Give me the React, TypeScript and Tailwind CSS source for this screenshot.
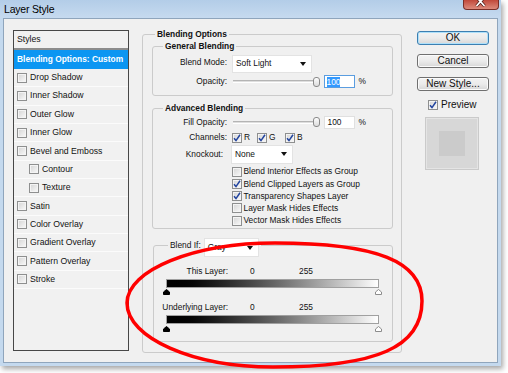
import React from 'react';

const styleRows = [
  { label: 'Drop Shadow' },
  { label: 'Inner Shadow' },
  { label: 'Outer Glow' },
  { label: 'Inner Glow' },
  { label: 'Bevel and Emboss' },
  { label: 'Contour', sub: true },
  { label: 'Texture', sub: true },
  { label: 'Satin' },
  { label: 'Color Overlay' },
  { label: 'Gradient Overlay' },
  { label: 'Pattern Overlay' },
  { label: 'Stroke' },
];

const advancedChecks = [
  { label: 'Blend Interior Effects as Group', checked: false },
  { label: 'Blend Clipped Layers as Group', checked: true },
  { label: 'Transparency Shapes Layer', checked: true },
  { label: 'Layer Mask Hides Effects', checked: false },
  { label: 'Vector Mask Hides Effects', checked: false },
];

const Check = ({ checked = false }: { checked?: boolean }) => (
  <span className="flex h-[10px] w-[10px] shrink-0 items-center justify-center border border-[#8e8f8f] bg-linear-to-br from-[#d4d4d4] to-[#fafafa] shadow-[inset_0_0_0_1px_#f4f4f4]">
    {checked && (
      <svg width="8" height="8" viewBox="0 0 8 8">
        <path d="M1 4.3 L3 6.6 L7 0.8" fill="none" stroke="#22449e" strokeWidth="1.5" />
      </svg>
    )}
  </span>
);

const Arrow = () => (
  <svg width="6" height="4" viewBox="0 0 6 4">
    <path d="M0 0 H6 L3 4 Z" fill="#111" />
  </svg>
);

const Select = ({ value, className }: { value: string; className: string }) => (
  <div className={`flex shrink-0 items-center justify-between border border-[#e3e3e3] bg-white pl-[3px] pr-[5px] ${className}`}>
    <span className="text-[8.4px] leading-[11px]">{value}</span>
    <Arrow />
  </div>
);

const Slider = () => (
  <div className="ml-[6px] flex w-[87px] items-center">
    <div className="h-[3px] flex-1 border-t border-b border-t-[#b4b4b4] border-b-white bg-[#dedede]" />
    <div className="h-[10px] w-[7px] rounded-[3px] border border-[#8a8a8a] bg-linear-to-b from-[#fdfdfd] to-[#dcdcdc]" />
  </div>
);

const Marker = ({ dark }: { dark?: boolean }) => (
  <svg width="7" height="6" viewBox="0 0 7 6">
    <path
      d="M0.5 5.5 V3 L3.5 0.5 L6.5 3 V5.5 Z"
      fill={dark ? '#000' : '#fff'}
      stroke={dark ? '#000' : '#8c8c8c'}
      strokeWidth="1"
    />
  </svg>
);

const Button = ({ label, primary }: { label: string; primary?: boolean }) => (
  <div
    className={`flex h-[14px] w-[72px] items-center justify-center rounded-[3px] border bg-linear-to-b from-[#f3f3f3] via-[#ebebeb] to-[#d7d7d7] text-[10px] leading-[12px] ${
      primary ? 'border-[#3c7fb1] shadow-[inset_0_0_0_1px_#aee0fa]' : 'border-[#707070] shadow-[inset_0_0_0_1px_#fbfbfb]'
    }`}
  >
    {label}
  </div>
);

const Label = ({ children, className = '' }: { children: React.ReactNode; className?: string }) => (
  <span className={`w-[74px] shrink-0 text-right text-[8.4px] leading-[11px] ${className}`}>{children}</span>
);

export default function App() {
  return (
    <div className="relative h-[373px] w-[508px] overflow-hidden bg-white font-['Liberation_Sans',Arial,sans-serif] text-[#111]">
      <div className="flex h-[366px] w-[501px] flex-col bg-[#c4d9ee] shadow-[2px_3px_5px_rgba(0,0,0,0.35)]">
        {/* title bar */}
        <div className="flex h-[18px] shrink-0 items-start justify-between bg-linear-to-b from-[#b3cde8] to-[#c6daef]">
          <span className="pl-[4px] pt-[3px] text-[10.5px] leading-[13px] tracking-[-0.2px] text-black">Layer Style</span>
          <div className="mr-[2px] h-[10px] w-[36px] rounded-b-[4px] border border-t-0 border-[#7a2e27] bg-linear-to-b from-[#c0473a] to-[#dc8a7c]">
            <svg width="34" height="9" viewBox="0 0 34 9">
              <path d="M12.5 -3 L20.5 6 M20.5 -3 L12.5 6" stroke="#4a1a16" strokeWidth="3.2" />
              <path d="M12.5 -3 L20.5 6 M20.5 -3 L12.5 6" stroke="#fff" strokeWidth="1.8" />
            </svg>
          </div>
        </div>

        {/* content */}
        <div className="ml-[3px] h-[345px] w-[495px] border border-[#8fa5bc] bg-[#f0f0f0]">
          <div className="flex items-start">
            {/* styles list */}
            <div className="ml-[8.5px] mt-[11px] h-[321px] w-[116px] shrink-0 border border-[#474747] bg-[#f1f1f1]">
              <div className="flex h-[19px] items-center border-b-2 border-[#8c8c8c] pl-[3.5px] text-[8.7px]">Styles</div>
              <div className="flex h-[19px] items-center bg-[#0c96f2] pl-[3.5px] text-[8.4px] font-bold text-white">
                Blending Options: Custom
              </div>
              {styleRows.map((r) => (
                <div
                  key={r.label}
                  className={`flex h-[18.35px] items-center gap-[3px] border-b border-[#fbfbfb] text-[8.7px] ${r.sub ? 'pl-[15.5px]' : 'pl-[3.5px]'}`}
                >
                  <Check />
                  <span>{r.label}</span>
                </div>
              ))}
            </div>

            {/* blending options */}
            <fieldset className="ml-[13.5px] mt-[9.5px] h-[324px] w-[260px] shrink-0 rounded-[3px] border border-[#cbcbcb] pl-[9px] pr-[7px]">
              <legend className="ml-[3px] px-[2px] text-[8.4px] font-bold leading-[11px]">Blending Options</legend>

              <fieldset className="mt-[1px] h-[55px] w-[241px] rounded-[3px] border border-[#cbcbcb]">
                <legend className="ml-[10px] px-[2px] text-[8.4px] font-bold leading-[11px]">General Blending</legend>
                <div className="mt-[3px] flex items-start">
                  <Label className="mt-[2px]">Blend Mode:</Label>
                  <Select value="Soft Light" className="ml-[5px] h-[18px] w-[80px]" />
                </div>
                <div className="mt-[1.5px] flex h-[15px] items-center">
                  <Label>Opacity:</Label>
                  <Slider />
                  <div className="ml-[3.5px] flex h-[13px] w-[31px] items-center border border-[#5a9de0] bg-white pl-[2px]">
                    <span className="bg-[#3399ff] text-[8.4px] leading-[10px] text-white">100</span>
                  </div>
                  <span className="ml-[4px] text-[8.4px]">%</span>
                </div>
              </fieldset>

              <fieldset className="mt-[7.5px] h-[126px] w-[241px] rounded-[3px] border border-[#cbcbcb]">
                <legend className="ml-[10px] px-[2px] text-[8.4px] font-bold leading-[11px]">Advanced Blending</legend>
                <div className="mt-[1px] flex h-[14px] items-center">
                  <Label>Fill Opacity:</Label>
                  <Slider />
                  <div className="ml-[3.5px] flex h-[13px] w-[31px] items-center border border-[#e0e0e0] bg-white pl-[3px]">
                    <span className="text-[8.4px] leading-[10px]">100</span>
                  </div>
                  <span className="ml-[4px] text-[8.4px]">%</span>
                </div>
                <div className="mt-[2.5px] flex h-[12px] items-center text-[8.4px]">
                  <Label>Channels:</Label>
                  <div className="ml-[5px] flex w-[25px] items-center gap-[2px]">
                    <Check checked />
                    <span>R</span>
                  </div>
                  <div className="flex w-[28px] items-center gap-[2px]">
                    <Check checked />
                    <span>G</span>
                  </div>
                  <div className="flex items-center gap-[2px]">
                    <Check checked />
                    <span>B</span>
                  </div>
                </div>
                <div className="mt-[1px] flex h-[19px] items-center">
                  <Label className="pr-[4px]">Knockout:</Label>
                  <Select value="None" className="ml-[4px] h-[19px] w-[62px]" />
                </div>
                <div className="mt-[2px] flex flex-col pl-[79px]">
                  {advancedChecks.map((c) => (
                    <div key={c.label} className="flex h-[12.25px] items-center gap-[1.5px] text-[8.4px]">
                      <Check checked={c.checked} />
                      <span>{c.label}</span>
                    </div>
                  ))}
                </div>
              </fieldset>

              <fieldset className="ml-[1px] mt-[9px] h-[104px] w-[240px] rounded-[3px] border border-[#cbcbcb]">
                <legend className="ml-[14px] flex h-[14px] items-start px-[2px]">
                  <span className="mt-[2px] text-[8.4px] leading-[11px]">Blend If:</span>
                  <Select value="Gray" className="ml-[3px] h-[19px] w-[55px]" />
                </legend>
                <div className="mt-[13.5px] flex h-[11px] items-center text-[8.4px]">
                  <Label className="w-[73px]">This Layer:</Label>
                  <span className="ml-[22px] w-[49px]">0</span>
                  <span>255</span>
                </div>
                <div className="ml-[12px] mt-[2.5px] h-[9px] w-[213px] border border-[#a0a0a0] bg-linear-to-r from-black to-white" />
                <div className="ml-[9px] mt-[1px] flex h-[6px] w-[219px] justify-between">
                  <Marker dark />
                  <Marker />
                </div>
                <div className="mt-[7px] flex h-[11px] items-center text-[8.4px]">
                  <Label className="w-[73px]">Underlying Layer:</Label>
                  <span className="ml-[22px] w-[49px]">0</span>
                  <span>255</span>
                </div>
                <div className="ml-[12px] mt-[2px] h-[9px] w-[213px] border border-[#a0a0a0] bg-linear-to-r from-black to-white" />
                <div className="ml-[9px] mt-[2px] flex h-[6px] w-[219px] justify-between">
                  <Marker dark />
                  <Marker />
                </div>
              </fieldset>
            </fieldset>

            {/* buttons */}
            <div className="ml-[15px] mt-[12px] flex w-[72px] shrink-0 flex-col">
              <Button label="OK" primary />
              <div className="mt-[9px]">
                <Button label="Cancel" />
              </div>
              <div className="mt-[9px]">
                <Button label="New Style..." />
              </div>
              <div className="ml-[11px] mt-[9px] flex h-[10px] items-center gap-[3px]">
                <Check checked />
                <span className="text-[10px] leading-[12px]">Preview</span>
              </div>
              <div className="ml-[8px] mt-[7px] flex h-[53px] w-[54px] items-center justify-center border border-[#cacaca] bg-[#d7d7d7] shadow-[inset_0_0_0_1px_#e4e4e4]">
                <div className="h-[25px] w-[26px] bg-[#cbcbcb]" />
              </div>
            </div>
          </div>
        </div>
      </div>

      {/* red annotation ellipse */}
      <svg className="pointer-events-none absolute left-0 top-0" width="508" height="373" viewBox="0 0 508 373">
        <path
          d="M127 303 C127 270 194 243 275 243 C378 243 422 262 422 301 C422 347 377 367 273 367 C193 367 127 338 127 303 Z"
          fill="none"
          stroke="#ff0000"
          strokeWidth="3.5"
        />
      </svg>
    </div>
  );
}
